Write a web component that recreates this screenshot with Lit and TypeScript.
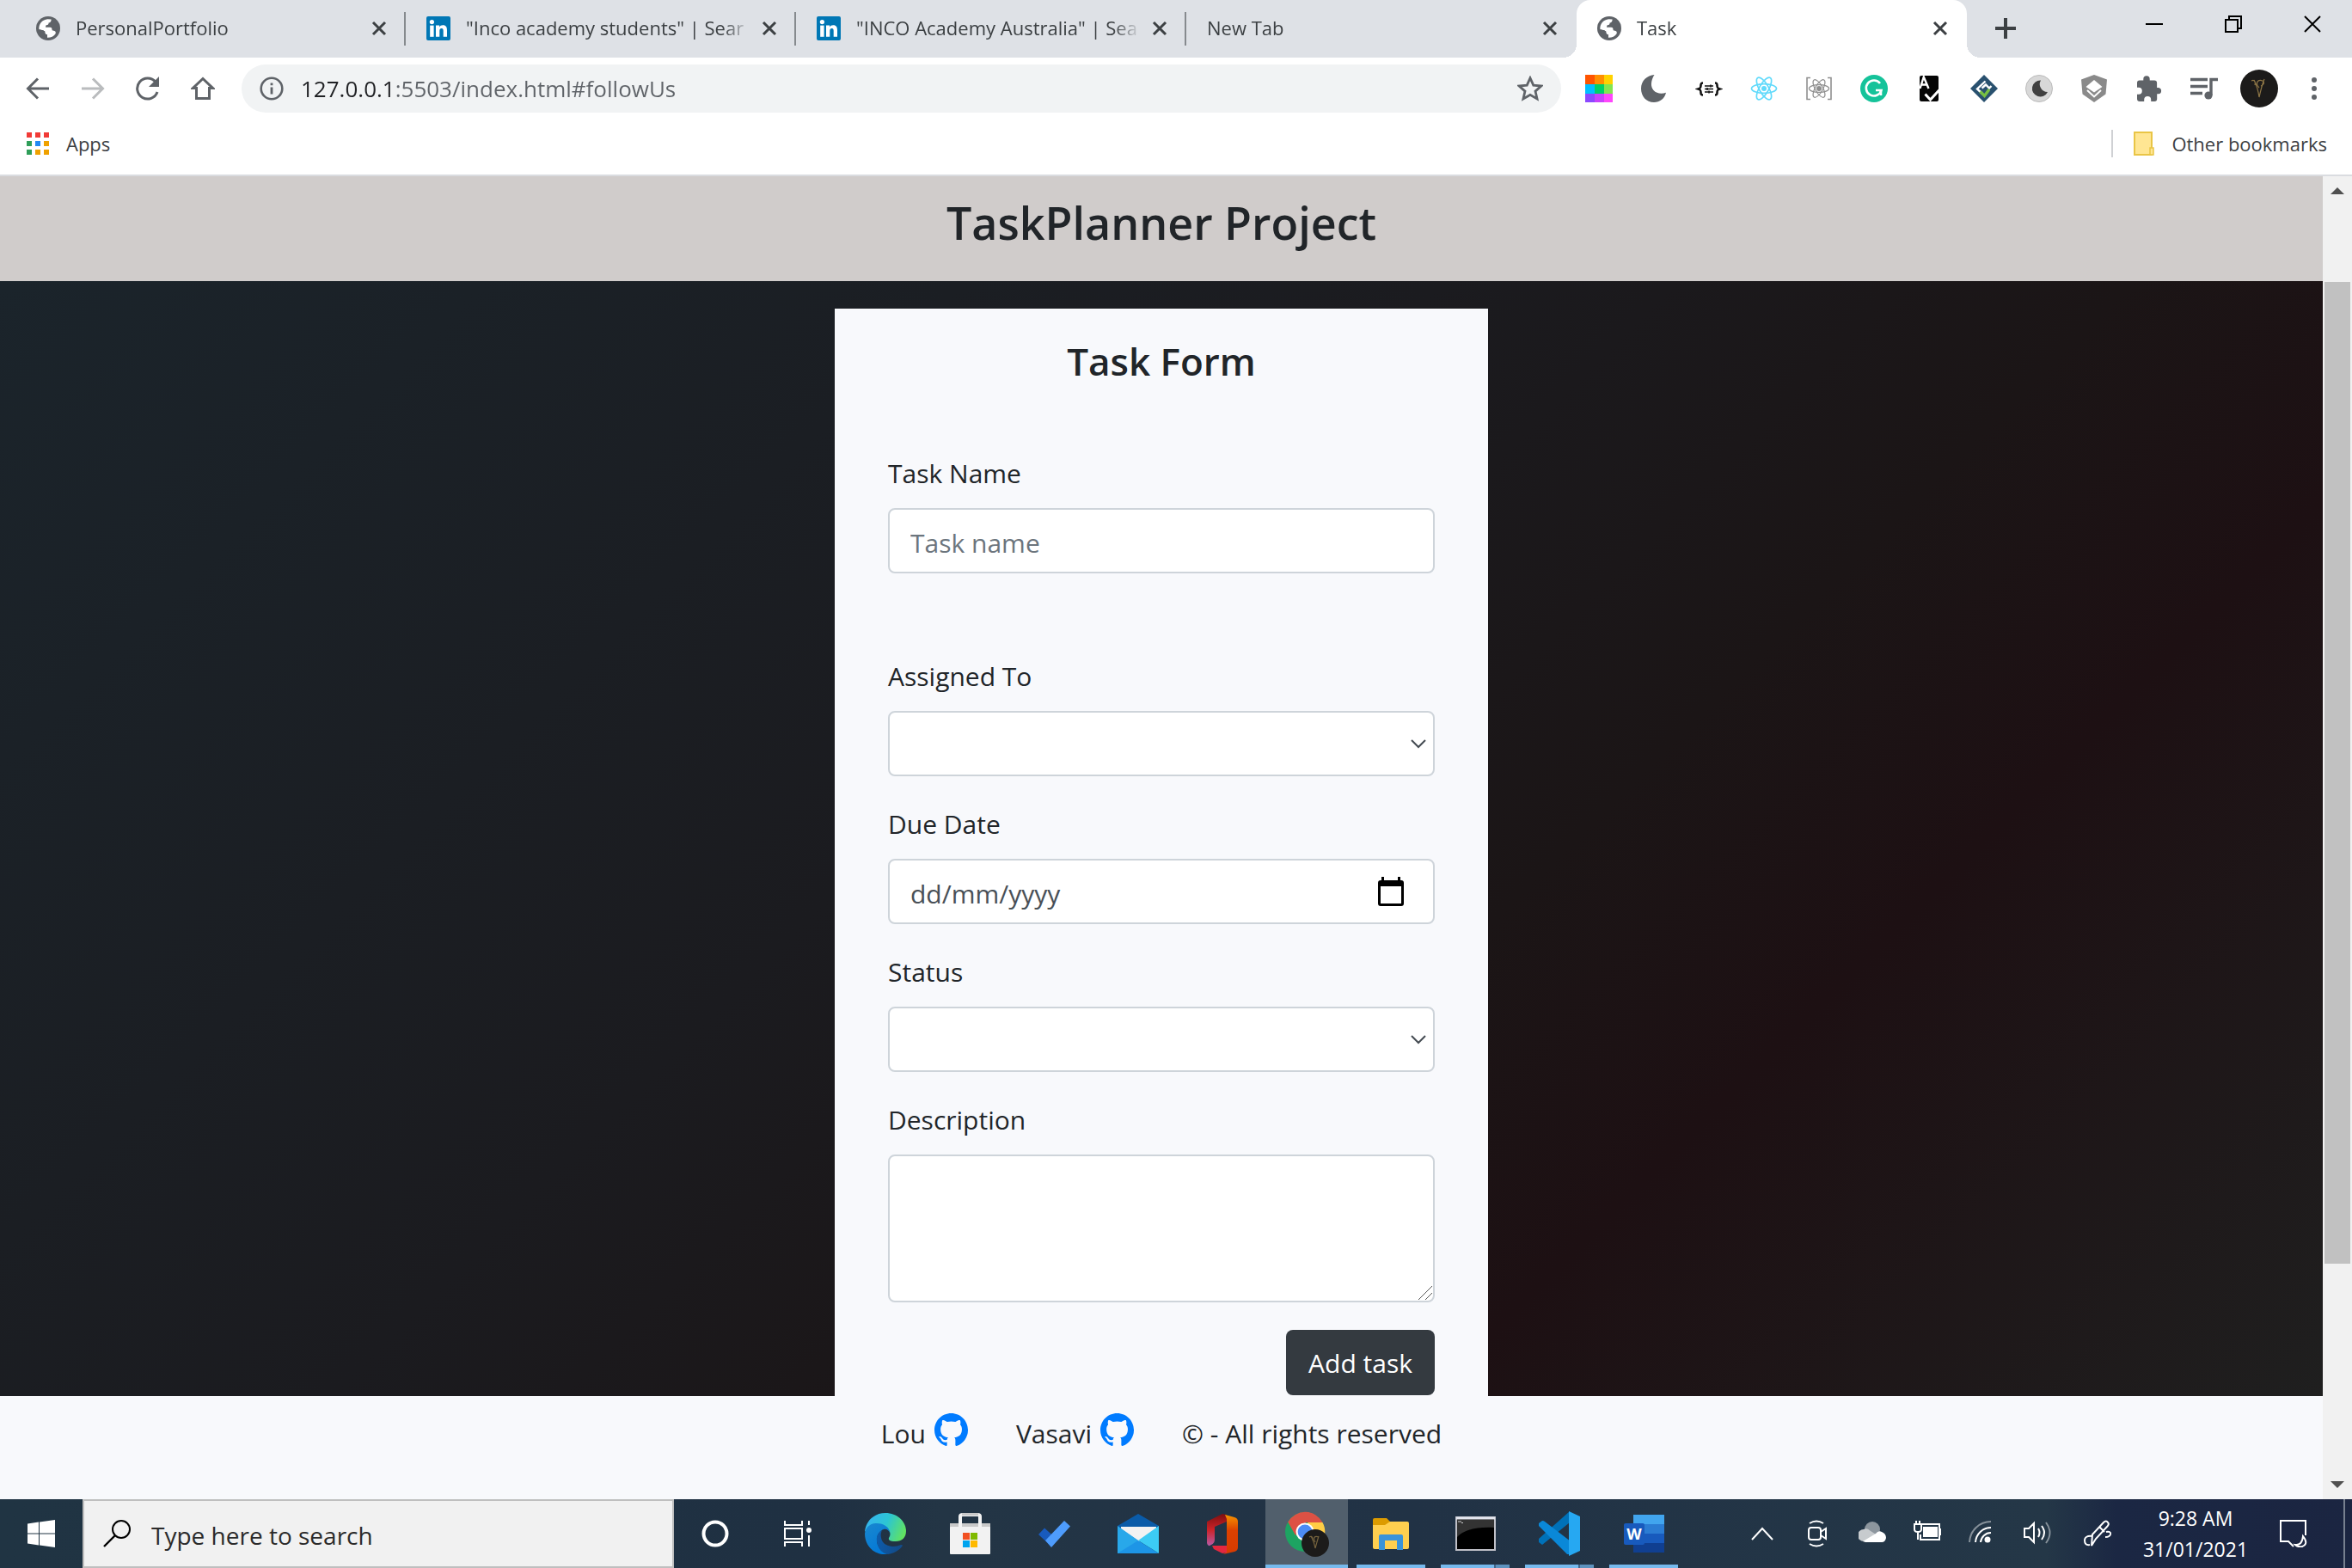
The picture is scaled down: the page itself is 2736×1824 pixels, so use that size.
import { LitElement, html, svg, css, nothing } from "lit";
import type { TemplateResult, SVGTemplateResult } from "lit";
import { customElement, property } from "lit/decorators.js";
import { classMap } from "lit/directives/class-map.js";

type Art = SVGTemplateResult;

const icon = (size: number, box: string, art: Art, height = size): TemplateResult =>
  html`<svg width=${size} height=${height} viewBox=${box} aria-hidden="true">${art}</svg>`;

/* ---------- Browser glyphs ---------- */

const globe = svg`
  <circle cx="14" cy="14" r="14" fill="#5f6368"/>
  <path d="M3.4 15.2C2.8 9 7.4 3.6 13.4 3.2L17.6 3.6C17.8 6 16.6 7.4 14.6 7.6C14.8 9.8 13.4 10.2 11.4 10.4L11 12.8H16C18.4 13 18.6 14.4 18.6 16.2L21.4 17C22.8 17.4 23 18.6 22.6 20.2C20.4 23.4 17 25 13 24.8V21.6C10.8 21.2 10 20 10.2 17.6L8 16.2Z" fill="#fff"/>
  <path d="M3.4 15.2L8 16.2L10.2 17.6C10 20 10.8 21.2 13 21.6V24.8C8 24.6 4 20.6 3.4 15.2Z" fill="#5f6368"/>`;

const linkedin = svg`
  <rect width="28" height="28" rx="2" fill="#0077b5"/>
  <circle cx="6.4" cy="6.6" r="2.6" fill="#fff"/>
  <rect x="4.2" y="10.6" width="4.4" height="13.2" fill="#fff"/>
  <path d="M11 10.600h4.100v1.900c.8-1.400 2.200-2.200 4.100-2.200 3.800 0 4.800 2.400 4.800 6v7.500h-4.300v-6.700c0-2-.5-3.100-2-3.100-1.700 0-2.400 1.200-2.400 3.100v6.700H11z" fill="#fff"/>`;

const cross = svg`<path d="M3 3L17 17M17 3L3 17" stroke="#3c4043" stroke-width="3" fill="none"/>`;
const plus = svg`<path d="M12 0V24M0 12H24" stroke="#3c4043" stroke-width="4"/>`;
const winMin = svg`<path d="M0 10H20" stroke="#000" stroke-width="2"/>`;
const winRestore = svg`<path d="M1 5H15V19H1ZM5 5V1H19V15H15" stroke="#000" stroke-width="2" fill="none"/>`;
const winClose = svg`<path d="M1 1L19 19M19 1L1 19" stroke="#000" stroke-width="2"/>`;

const back = svg`<path d="M27 14H3M14 2.500L2.500 14L14 25.500" stroke="#5f6368" stroke-width="3" fill="none"/>`;
const forward = svg`<path d="M1 14H25M14 2.500L25.500 14L14 25.500" stroke="#babcbe" stroke-width="3" fill="none"/>`;
const reload = svg`<path d="M25 18A12 12 0 1 1 23 6.500" stroke="#5f6368" stroke-width="3" fill="none"/><path d="M27 0V12H15Z" fill="#5f6368"/>`;
const home = svg`<path d="M14 2.500L2.500 13.500H6.500V25.500H21.500V13.500H25.500Z" stroke="#5f6368" stroke-width="3" fill="none"/>`;
const info = svg`<circle cx="14" cy="14" r="12.300" stroke="#5f6368" stroke-width="2.600" fill="none"/><path d="M14 12.500V20.500M14 7.500V10.300" stroke="#5f6368" stroke-width="2.800"/>`;
const star = svg`<path d="M14 2.600L17.500 10.400L26 11.200L19.600 16.900L21.500 25.200L14 20.800L6.500 25.200L8.400 16.900L2 11.200L10.500 10.400Z" stroke="#5f6368" stroke-width="2.600" fill="none"/>`;

/* ---------- Extension glyphs, drawn in a 32 unit box ---------- */

const palette = svg`
  <rect width="11" height="11" fill="#ff5400"/><rect x="11" width="11" height="11" fill="#ff8f00"/><rect x="22" width="10" height="11" fill="#ffd200"/>
  <rect y="11" width="11" height="11" fill="#00bfff"/><rect x="11" y="11" width="11" height="11" fill="#00d067"/><rect x="22" y="11" width="10" height="11" fill="#83e650"/>
  <rect y="22" width="11" height="10" fill="#8c48ff"/><rect x="11" y="22" width="11" height="10" fill="#c940fc"/><rect x="22" y="22" width="10" height="10" fill="#ff46fb"/>`;
const moon = svg`<path d="M16.500 0C12 7 12 14 15.500 18C19 22 25 22.500 30 20.800C28.500 28 22.500 32 16 32C7 32 1 25 1 16C1 7 8 .5 16.500 0Z" fill="#5f6368"/>`;
const braces = svg`<path d="M9 9.500C6.500 9.500 6.500 10.500 6.500 12.500C6.500 14.500 6.500 15.500 3.500 16.500C6.500 17.500 6.500 18.500 6.500 20.500C6.500 22.500 6.500 23.500 9 23.500M23 9.500C25.500 9.500 25.500 10.500 25.500 12.500C25.500 14.500 25.500 15.500 28.500 16.500C25.500 17.500 25.500 18.500 25.500 20.500C25.500 22.500 25.500 23.500 23 23.500" stroke="#111" stroke-width="2.600" fill="none"/><path d="M11 13H21M11 16.500H21M11 20H21M18 11.500V14.500M14 15V18M16 18.500V21.500" stroke="#111" stroke-width="1.500"/>`;
const atom = (color: string, rx: number, ry: number, w: number): Art => svg`
  <g fill="none" stroke=${color} stroke-width=${w}>
    <ellipse cx="16" cy="16" rx=${rx} ry=${ry}/>
    <ellipse cx="16" cy="16" rx=${rx} ry=${ry} transform="rotate(60 16 16)"/>
    <ellipse cx="16" cy="16" rx=${rx} ry=${ry} transform="rotate(120 16 16)"/>
  </g><circle cx="16" cy="16" r="3" fill=${color}/>`;
const react = atom("#61dafb", 14.5, 5.4, 1.7);
const reactBox = svg`${atom("#8f8f8f", 11.6, 4.4, 1.2)}<path d="M6 3.500H2V28.500H6M26 3.500H30V28.500H26" stroke="#8f8f8f" stroke-width="1.600" fill="none"/>`;
const grammarly = svg`<circle cx="16" cy="16" r="16" fill="#15c39a"/><path d="M23 10A9 9 0 1 0 24.500 18H18" stroke="#fff" stroke-width="2.600" fill="none"/><path d="M24 24V18.500" stroke="#fff" stroke-width="2.600"/>`;
const spell = svg`<rect x="5" y="1" width="22" height="30" rx="2" fill="#050505"/><path d="M5.500 16L9.800 2.500L15.500 16M7 11.500H13.500" stroke="#fff" stroke-width="2.400" fill="none"/><path d="M11.500 22.500L17.500 29L29 16.500" stroke="#fff" stroke-width="3" fill="none"/>`;
const diamond = svg`<path d="M16 0L32 16L16 32L0 16Z" fill="#29516f"/><path d="M17.500 7.500L8 16.500L13.500 21.500M13.500 15.500L18 11.500L22 15.500L24.500 13" stroke="#fff" stroke-width="2.400" fill="none"/><path d="M11.500 19.500L16.500 24.500L22 17" stroke="#77c043" stroke-width="3.400" fill="none"/>`;
const darkToggle = svg`<circle cx="16" cy="16" r="15.500" fill="#d8d8d8" stroke="#bbb"/><path d="M18 6.500A9.500 9.500 0 1 0 26 20A9 9 0 0 1 18 6.500Z" fill="#3f3f3f"/>`;
const shield = svg`<path d="M16 0L31 5.500L29.500 22.500L16 32L2.500 22.500L1 5.500Z" fill="#8a8a8a"/><path d="M16 6L25.500 14L16 20.500L6.500 14Z" fill="#fff"/><path d="M8 18L16 25.500L24 18" stroke="#fff" stroke-width="2" fill="none"/>`;
const puzzle = svg`<path d="M27 15h-1.900V9.500a3 3 0 0 0-3-3H16.700V5a3.700 3.700 0 0 0-7.400 0v1.500H5a2.900 2.900 0 0 0-3 3v5.200h1.800a4 4 0 0 1 0 8H2V28a3 3 0 0 0 3 3h5.200v-2a4 4 0 0 1 8 0v2h4a3 3 0 0 0 3-3v-5.700H27a3.700 3.700 0 0 0 0-7.300z" fill="#5f6368"/>`;
const queue = svg`<path d="M0 5.500H20M0 13.500H20M0 21.500H14M24 24V5.500H32" stroke="#5f6368" stroke-width="3.400" fill="none"/><circle cx="21" cy="24" r="4.600" fill="#5f6368"/>`;
const avatar = svg`<circle cx="22" cy="22" r="22" fill="#1c1b1a"/><path d="M13 13C17 11 18 15 17 18M16 12C19 18 21 25 22 32C24 23 26 16 28 11M22 21C17 16 20 11 26 13C29 15 27 18 24 19" stroke="#8f7746" stroke-width="1.200" fill="none"/>`;
const kebab = svg`<circle cx="16" cy="6" r="3" fill="#5f6368"/><circle cx="16" cy="16" r="3" fill="#5f6368"/><circle cx="16" cy="26" r="3" fill="#5f6368"/>`;

const appsGrid = svg`
  <rect width="6" height="6" fill="#f13a36"/><rect x="10" width="6" height="6" fill="#f13a36"/><rect x="20" width="6" height="6" fill="#f13a36"/>
  <rect y="10" width="6" height="6" fill="#2f9e59"/><rect x="10" y="10" width="6" height="6" fill="#2289f4"/><rect x="20" y="10" width="6" height="6" fill="#efa100"/>
  <rect y="20" width="6" height="6" fill="#2f9e59"/><rect x="10" y="20" width="6" height="6" fill="#efa100"/><rect x="20" y="20" width="6" height="6" fill="#efa100"/>`;
const folder = svg`<path d="M1 1H21V27H1Z" fill="#ffe693" stroke="#e9c546" stroke-width="2"/><path d="M19 19H23V27H19Z" fill="#ffe693" stroke="#e9c546" stroke-width="1.500"/>`;

/* ---------- Page glyphs ---------- */

const github = svg`<path fill="#007bff" d="M8 0C3.580 0 0 3.580 0 8c0 3.540 2.290 6.530 5.470 7.590.4.070.55-.17.55-.38 0-.19-.01-.82-.01-1.490-2.010.37-2.530-.49-2.690-.94-.09-.23-.48-.94-.82-1.130-.28-.15-.68-.52-.01-.53.63-.01 1.080.58 1.230.82.72 1.210 1.870.87 2.330.66.070-.52.28-.87.51-1.070-1.780-.2-3.640-.89-3.640-3.950 0-.87.31-1.590.82-2.150-.08-.2-.36-1.020.08-2.120 0 0 .67-.21 2.200.82.64-.18 1.320-.27 2-.27.68 0 1.360.09 2 .27 1.530-1.040 2.200-.82 2.200-.82.44 1.100.16 1.920.08 2.120.51.56.82 1.270.82 2.150 0 3.070-1.870 3.750-3.650 3.950.29.25.54.73.54 1.480 0 1.070-.01 1.930-.01 2.200 0 .21.15.46.55.38A8.013 8.013 0 0016 8c0-4.420-3.580-8-8-8z"/>`;
const chevron = svg`<path d="M1 1L9 9L17 1" stroke="#444b52" stroke-width="2" fill="none"/>`;
const calendar = svg`<path d="M3 4H27A3 3 0 0 1 30 7V31A3 3 0 0 1 27 34H3A3 3 0 0 1 0 31V7A3 3 0 0 1 3 4ZM3 11V31H27V11Z" fill="#000" fill-rule="evenodd"/><path d="M4 0H7V5H4ZM23 0H26V5H23Z" fill="#000"/>`;
const grip = svg`<path d="M0 16L16 0M8 16L16 8" stroke="#555" stroke-width="1"/>`;
const arrowUp = svg`<path d="M0 8L8 0L16 8Z" fill="#505050"/>`;
const arrowDown = svg`<path d="M0 0L8 8L16 0Z" fill="#505050"/>`;

/* ---------- Taskbar glyphs ---------- */

const windows = svg`<path d="M0 4.400L13 2.600V15.400H0ZM14 2.400L32 0V15.400H14ZM0 16.400H13V29.400L0 27.600ZM14 16.400H32V32L14 29.600Z" fill="#fff"/>`;
const magnifier = svg`<circle cx="21" cy="11" r="10" stroke="#000" stroke-width="2" fill="none"/><path d="M14 18L1 31" stroke="#000" stroke-width="2.400"/>`;
const cortana = svg`<circle cx="16" cy="16" r="13.500" stroke="#fff" stroke-width="4" fill="none"/>`;
const taskView = svg`<path d="M1 0V5H21V0M1 30V25H21V30M1 9H21V21H1ZM29 0V5M29 17V30" stroke="#fff" stroke-width="2" fill="none"/><circle cx="29" cy="11" r="3" fill="#fff"/>`;
const edge = svg`
  <defs>
    <linearGradient id="edge-top" x1="0" x2="1" y1=".3" y2=".6"><stop offset="0" stop-color="#35b4f0"/><stop offset=".5" stop-color="#2cc5d3"/><stop offset="1" stop-color="#62e35f"/></linearGradient>
    <linearGradient id="edge-left" x1="0" x2=".6" y1="0" y2="1"><stop offset="0" stop-color="#1a88cf"/><stop offset="1" stop-color="#0278d7"/></linearGradient>
    <linearGradient id="edge-low" x1="0" x2="1" y1=".4" y2=".6"><stop offset="0" stop-color="#0d5bab"/><stop offset="1" stop-color="#134a86"/></linearGradient>
  </defs>
  <path d="M0 22C1 9 11 0 24 0C38 0 48 10 48 21C48 29 43 33 36 33C31 33 27 32 28 29C30 26 30 23 28 20C24 12 8 11 0 22Z" fill="url(#edge-top)"/>
  <path d="M0 24C1 16 7 12 14 12C22 12 29 17 29 23C28 20 25 18 22 19C18 20 14 25 14 31C14 39 19 46 27 48C12 50 0 39 0 24Z" fill="url(#edge-left)"/>
  <path d="M20 20C15 23 13 28 14 33C15 41 20 47 27 48C34 47 41 43 44 38C44 37 43 37 42 37C33 41 21 39 19 29C18 25 19 22 20 20Z" fill="url(#edge-low)"/>`;
const store = svg`
  <path d="M0 12H47V17H0Z" fill="#c9c9c9"/><path d="M12 16V4Q12 2 15 2H32Q35 2 35 4V16" stroke="#f3f3f3" stroke-width="4" fill="none"/>
  <path d="M14 0H33V3H14Z" fill="#c9c9c9"/><rect y="16" width="47" height="32" rx="1" fill="#f2f2f2"/>
  <rect x="15" y="23" width="8" height="8" fill="#f25022"/><rect x="24" y="23" width="8" height="8" fill="#7fba00"/><rect x="15" y="32" width="8" height="8" fill="#00a4ef"/><rect x="24" y="32" width="8" height="8" fill="#ffb900"/>`;
const todo = svg`<path d="M0 16L7 8.500L22 22L15 30Z" fill="#185abd"/><path d="M30 0L37 6.500L15 31L8 23Z" fill="#4e9cfc"/>`;
const mail = svg`
  <path d="M0 14L24 0L48 14V24H0Z" fill="#0a5ba8"/><path d="M4 15H45V32H4Z" fill="#f2f2f2"/>
  <path d="M48 14V46L24 31Z" fill="#3ccbf4"/><path d="M0 15L24 31L48 46H0Z" fill="#1d95e6"/><path d="M0 14L24 31L0 46Z" fill="#28a8ea"/>`;
const office = svg`
  <defs><linearGradient id="office-left" x1="0" x2="0" y1="0" y2="1"><stop offset="0" stop-color="#7d0f10"/><stop offset=".5" stop-color="#cd2329"/><stop offset="1" stop-color="#b95aa5"/></linearGradient>
  <linearGradient id="office-right" x1="0" x2="0" y1="0" y2="1"><stop offset="0" stop-color="#f79400"/><stop offset=".4" stop-color="#dd4100"/><stop offset="1" stop-color="#d83b01"/></linearGradient></defs>
  <path d="M18 0L0 9V34Q1 39 5 36Q9 34 9 30V15L23 9V1Z" fill="url(#office-left)"/><path d="M21 1L32 4Q36 5 36 9V39Q36 43 32 44L19 47L23 44V6Z" fill="url(#office-right)"/><path d="M6 37H23V45L18 46L8 41Z" fill="#e3283f"/>`;
const chrome = svg`
  <circle cx="23" cy="24" r="23" fill="#1da462"/><path d="M3.200 12.500A23 23 0 0 1 43.500 13H24L12 28Z" fill="#dd5144"/>
  <path d="M26 13H43.500A23 23 0 0 1 23 47L33 30Z" fill="#ffcd46"/><circle cx="23" cy="24" r="10.500" fill="#fff"/><circle cx="23" cy="24" r="8.400" fill="#4c8bf5"/>
  <circle cx="35" cy="37" r="16" fill="#1c1b1a"/><path d="M28 30C32 28 32 32 32 34M30 29C33 34 34 38 35 43C37 36 38 32 39 29M35 36C32 31 34 28 39 30" stroke="#77653f" stroke-width="1.200" fill="none"/>`;
const explorer = svg`<path d="M0 2Q0 0 2 0H16L20 4V10H0Z" fill="#dc9b00"/><path d="M0 8H14L20 4H40Q42 4 42 6V34Q42 36 40 36H2Q0 36 0 34Z" fill="#ffcf4f"/><path d="M7 37V21Q7 19 9 19H33Q35 19 35 21V37H28V26H14V37Z" fill="#3a93d9"/>`;
const terminal = svg`<rect x="1" y="1" width="45" height="38" fill="#000" stroke="#bfc0c8" stroke-width="2"/><path d="M2 3.500V24C10 15 26 12 45 13V3.500Z" fill="#333"/><path d="M1 2H46" stroke="#e4e6ef" stroke-width="3"/><path d="M3 6H5M6 5V7M7 7.500H9" stroke="#ccc"/>`;
const vscode = svg`<path d="M0 36L4 39L36 13V0L0 32Z" fill="#0071b8"/><path d="M0 14L4 11Q6 11 7 12L37 35V50L33 50L1 18Q-1 16 0 14Z" fill="#0a88d8"/><path d="M35 0L48 6V46L35 52Z" fill="#26a8f2"/>`;
const word = svg`
  <rect x="11" width="36" height="11" fill="#41a5ee"/><rect x="11" y="11" width="36" height="11" fill="#2b7cd3"/><rect x="11" y="22" width="36" height="11" fill="#185abd"/><rect x="11" y="33" width="36" height="11" fill="#103f91"/>
  <rect y="10" width="24" height="25" rx="2" fill="#185abd"/><text x="12" y="29" text-anchor="middle" font-family="Open Sans, sans-serif" font-weight="700" font-size="18" fill="#fff">W</text>`;

const caret = svg`<path d="M1 15L13 2L25 15" stroke="#fff" stroke-width="2" fill="none"/>`;
const meetNow = svg`<rect x="6" y="9" width="14" height="14" rx="3" stroke="#fff" stroke-width="2" fill="none"/><path d="M20 14L26 10V22L20 18" stroke="#fff" stroke-width="2" fill="none"/><path d="M7 4Q15 -1 23 4M7 28Q15 33 23 28" stroke="#fff" stroke-width="2" fill="none"/>`;
const cloud = svg`<circle cx="16" cy="11" r="9" fill="#8d969e"/><path d="M6 25A7 7 0 0 1 6 11Q10 9 14 13L22 18L8 25Z" fill="#c7cbce"/><path d="M5 25L20 16Q23 12 27 14Q32 16 32 21Q31 26 27 26H8Z" fill="#fff"/>`;
const battery = svg`<path d="M10 5H30V23H8V17" stroke="#fff" stroke-width="2" fill="none"/><rect x="11" y="8" width="17" height="12" fill="#fff"/><rect x="30" y="10" width="3" height="8" fill="#fff"/><path d="M1 5H9V11Q9 14 5 14Q1 14 1 11ZM3 5V1M7 5V1M5 14V23" stroke="#fff" stroke-width="2" fill="#213445"/>`;
const wifi = svg`<g fill="none" stroke="#fff" stroke-width="2"><path d="M1 26A25 25 0 0 1 26 2" opacity=".45"/><path d="M8 26A18 18 0 0 1 26 9M14 26A12 12 0 0 1 26 15"/></g><circle cx="22" cy="23" r="3.500" fill="#fff"/>`;
const volume = svg`<g fill="none" stroke="#fff" stroke-width="2"><path d="M1 10H6L12 4V26L6 20H1Z"/><path d="M17 10Q20 15 17 20M21 7Q27 15 21 23"/><path d="M26 3Q35 15 26 27" opacity=".45"/></g>`;
const pen = svg`<path d="M10 17L23 3Q26 0 28 3Q30 5 27 8L14 22L9 30ZM18 8L24 14M10 19Q1 18 1 24Q1 30 7 29M26 14Q32 13 31 17Q30 20 25 20" stroke="#fff" stroke-width="2" fill="none"/>`;
const notify = svg`<path d="M30 18V1H1V25H10L16 31" stroke="#fff" stroke-width="2" fill="none"/><path d="M27 19Q34 28 26 31Q21 32 18 29Q26 30 27 19Z" stroke="#fff" stroke-width="2" fill="none"/>`;

@customElement("browser-tab")
export class BrowserTab extends LitElement {
  @property() label = "";
  @property() mark: "globe" | "linkedin" | "none" = "none";
  @property({ type: Boolean, reflect: true }) active = false;
  @property({ type: Boolean, reflect: true }) ruled = false;

  static styles = css`
    :host {
      flex: 0 1 454px;
      min-width: 0;
      display: flex;
      align-items: center;
      gap: 18px;
      height: 67px;
      padding: 0 17px 8px 24px;
      box-sizing: border-box;
      position: relative;
    }
    :host([ruled])::after {
      content: "";
      position: absolute;
      right: 0;
      top: 14px;
      width: 2px;
      height: 39px;
      background: #868a8e;
    }
    :host([active]) {
      background: #fff;
      border-radius: 16px 16px 0 0;
    }
    :host([active])::before,
    :host([active])::after {
      content: "";
      position: absolute;
      bottom: 0;
      width: 16px;
      height: 16px;
    }
    :host([active])::before {
      right: 100%;
      background: radial-gradient(circle at 0 0, transparent 16px, #fff 16px);
    }
    :host([active])::after {
      left: 100%;
      background: radial-gradient(circle at 100% 0, transparent 16px, #fff 16px);
    }
    .name {
      flex: 1;
      min-width: 0;
      overflow: hidden;
      white-space: nowrap;
      line-height: 32px;
      margin-top: 4px;
      mask-image: linear-gradient(90deg, #000 calc(100% - 32px), transparent);
    }
    svg {
      display: block;
      flex: none;
      margin-top: 7px;
    }
    .close {
      border: 0;
      background: none;
      padding: 0 4px;
      margin-left: -10px;
    }
  `;

  render() {
    return html`
      ${this.mark === "globe" ? icon(28, "0 0 28 28", globe) : this.mark === "linkedin" ? icon(28, "0 0 28 28", linkedin) : nothing}
      <span class="name">${this.label}</span>
      <button class="close" aria-label="Close ${this.label}">${icon(20, "0 0 20 20", cross)}</button>
    `;
  }
}

@customElement("browser-chrome")
export class BrowserChrome extends LitElement {
  static styles = css`
    :host {
      display: block;
      background: #fff;
      color: #3c4043;
      font-size: 22px;
      border-bottom: 2px solid #dadce0;
    }
    svg { display: block; }
    button {
      border: 0;
      background: none;
      padding: 0;
      display: grid;
      place-items: center;
      font: inherit;
      color: inherit;
    }
    .strip {
      display: flex;
      background: #dee1e6;
      padding-left: 18px;
      height: 67px;
    }
    .newtab { width: 90px; height: 66px; flex: none; }
    .controls {
      margin-left: auto;
      display: flex;
      align-items: flex-start;
    }
    .controls button { width: 92px; height: 56px; }
    .toolbar {
      display: flex;
      align-items: center;
      height: 72px;
      padding: 0 12px;
    }
    .tool { width: 64px; height: 64px; flex: none; }
    .omnibox {
      flex: 1;
      min-width: 0;
      display: flex;
      align-items: center;
      height: 56px;
      border-radius: 28px;
      background: #f1f3f4;
      padding: 0 21px;
      margin: 0 12px 0 13px;
      gap: 20px;
    }
    .url {
      flex: 1;
      min-width: 0;
      border: 0;
      outline: 0;
      padding: 0;
      font: inherit;
      font-size: 26px;
      line-height: 40px;
      color: transparent;
      background: linear-gradient(90deg, #202124 108px, #5f6368 108px);
      -webkit-background-clip: text;
      background-clip: text;
    }
    .bookmarks {
      display: flex;
      align-items: center;
      height: 56px;
      padding: 0 29px 8px 31px;
    }
    .bookmark {
      display: flex;
      align-items: center;
      gap: 20px;
      line-height: 32px;
      text-decoration: none;
      color: inherit;
    }
    .other {
      margin-left: auto;
      border-left: 2px solid #cfd1d4;
      padding-left: 24px;
    }
  `;

  render() {
    const tools: Array<[string, Art]> = [
      ["Palette", palette], ["Night mode", moon], ["JSON viewer", braces], ["React tools", react],
      ["React inspector", reactBox], ["Grammar", grammarly], ["Spelling", spell], ["Diamond", diamond],
      ["Dark toggle", darkToggle], ["Shield", shield], ["Extensions", puzzle], ["Media", queue],
    ];
    return html`
      <div class="strip">
        <browser-tab mark="globe" label="PersonalPortfolio" ruled></browser-tab>
        <browser-tab mark="linkedin" label='"Inco academy students" | Sear' ruled></browser-tab>
        <browser-tab mark="linkedin" label='"INCO Academy Australia" | Sea' ruled></browser-tab>
        <browser-tab label="New Tab"></browser-tab>
        <browser-tab mark="globe" label="Task" active></browser-tab>
        <button class="newtab" aria-label="New tab">${icon(24, "0 0 24 24", plus)}</button>
        <div class="controls">
          <button aria-label="Minimise">${icon(20, "0 0 20 20", winMin)}</button>
          <button aria-label="Restore">${icon(20, "0 0 20 20", winRestore)}</button>
          <button aria-label="Close window">${icon(20, "0 0 20 20", winClose)}</button>
        </div>
      </div>
      <div class="toolbar">
        <button class="tool" aria-label="Back">${icon(28, "0 0 28 28", back)}</button>
        <button class="tool" aria-label="Forward">${icon(28, "0 0 28 28", forward)}</button>
        <button class="tool" aria-label="Reload">${icon(28, "0 0 28 28", reload)}</button>
        <button class="tool" aria-label="Home">${icon(28, "0 0 28 28", home)}</button>
        <div class="omnibox">
          ${icon(28, "0 0 28 28", info)}
          <input class="url" type="text" aria-label="Address" value="127.0.0.1:5503/index.html#followUs">
          <button aria-label="Bookmark this page">${icon(30, "0 0 28 28", star)}</button>
        </div>
        ${tools.map(([name, art]) => html`<button class="tool" aria-label=${name}>${icon(32, "0 0 32 32", art)}</button>`)}
        <button class="tool" aria-label="Profile">${icon(44, "0 0 44 44", avatar)}</button>
        <button class="tool" aria-label="Menu">${icon(32, "0 0 32 32", kebab)}</button>
      </div>
      <div class="bookmarks">
        <a class="bookmark" href="#apps">${icon(26, "0 0 26 26", appsGrid)}Apps</a>
        <a class="bookmark other" href="#other">${icon(24, "0 0 24 28", folder, 28)}Other bookmarks</a>
      </div>
    `;
  }
}

@customElement("task-page")
export class TaskPage extends LitElement {
  static styles = css`
    :host {
      flex: 1;
      min-width: 0;
      display: flex;
      flex-direction: column;
      background: #f8f9fc;
      color: #212529;
      font-size: 30px;
      line-height: 48px;
    }
    svg { display: block; }
    h1, h2 { margin: 0; font-weight: 600; text-align: center; }
    .banner { background: #d0cccb; padding: 20px 0 34px; }
    h1 { font-size: 52px; line-height: 68px; }
    main {
      display: flex;
      justify-content: center;
      padding-top: 32px;
      background: linear-gradient(135deg, #1b242b, #1b1b1f 42%, #1b1516 62%, #1d1013 74%, #1f1f1f);
    }
    .card {
      box-sizing: border-box;
      width: 100%;
      max-width: 760px;
      padding: 32px 62px 1px;
      background: #f8f9fc;
      display: flex;
      flex-direction: column;
    }
    h2 { font-size: 44px; line-height: 58px; margin-bottom: 78px; }
    .field { display: flex; flex-direction: column; gap: 16px; margin-bottom: 32px; }
    .field.roomy { margin-bottom: 96px; }
    .stack { display: grid; align-items: center; }
    .stack > * { grid-area: 1 / 1; }
    .control {
      box-sizing: border-box;
      width: 100%;
      height: 76px;
      border: 2px solid #ced4da;
      border-radius: 8px;
      background: #fff;
      padding: 4px 24px 0;
      font: inherit;
      color: #495057;
      margin: 0;
      outline: 0;
      appearance: none;
    }
    .control::placeholder { color: #6c757d; opacity: 1; }
    .date::placeholder { color: #495057; }
    textarea.control { height: 172px; resize: none; }
    .stack > svg, .pick { justify-self: end; pointer-events: none; }
    .chev svg { margin-right: 10px; }
    .corner svg { align-self: end; margin: 0 3px 3px 0; }
    .pick { border: 0; background: none; padding: 0; margin-right: 36px; }
    .add {
      align-self: flex-end;
      height: 76px;
      padding: 2px 26px 0;
      border: 0;
      border-radius: 8px;
      background: #343a40;
      color: #fff;
      font: inherit;
    }
    footer {
      flex: 1;
      display: flex;
      justify-content: center;
      align-items: flex-start;
      gap: 56px;
      padding: 20px 0 48px;
    }
    .who { display: flex; gap: 10px; }
    p { margin: 0; }
  `;

  render() {
    return html`
      <header class="banner"><h1>TaskPlanner Project</h1></header>
      <main>
        <form class="card" @submit=${(e: Event) => e.preventDefault()}>
          <h2>Task Form</h2>
          <div class="field roomy">
            <label for="name">Task Name</label>
            <input id="name" class="control" type="text" placeholder="Task name">
          </div>
          <div class="field">
            <label for="who">Assigned To</label>
            <div class="stack chev"><select id="who" class="control"><option></option></select>${icon(18, "0 0 18 11", chevron, 11)}</div>
          </div>
          <div class="field">
            <label for="due">Due Date</label>
            <div class="stack">
              <input id="due" class="control date" type="text" placeholder="dd/mm/yyyy">
              <button class="pick" type="button" aria-label="Choose a date">${icon(30, "0 0 30 34", calendar, 34)}</button>
            </div>
          </div>
          <div class="field">
            <label for="status">Status</label>
            <div class="stack chev"><select id="status" class="control"><option></option></select>${icon(18, "0 0 18 11", chevron, 11)}</div>
          </div>
          <div class="field">
            <label for="desc">Description</label>
            <div class="stack corner"><textarea id="desc" class="control"></textarea>${icon(16, "0 0 16 16", grip)}</div>
          </div>
          <button class="add" type="submit">Add task</button>
        </form>
      </main>
      <footer>
        <div class="who"><span>Lou</span><a href="#lou" aria-label="Lou on GitHub">${icon(39, "0 0 16 16", github)}</a></div>
        <div class="who"><span>Vasavi</span><a href="#vasavi" aria-label="Vasavi on GitHub">${icon(39, "0 0 16 16", github)}</a></div>
        <p>© - All rights reserved</p>
      </footer>
    `;
  }
}

@customElement("scroll-rail")
export class ScrollRail extends LitElement {
  static styles = css`
    :host {
      flex: none;
      width: 34px;
      display: flex;
      flex-direction: column;
      align-items: center;
      background: #f1f1f1;
    }
    button { border: 0; background: none; padding: 0; height: 34px; width: 34px; display: grid; place-items: center; }
    .track { flex: 1; width: 30px; display: flex; flex-direction: column; }
    .before { flex: 89; }
    .thumb { flex: 1142; background: #c1c1c1; }
    .after { flex: 240; }
  `;

  render() {
    return html`
      <button aria-label="Scroll up">${icon(16, "0 0 16 8", arrowUp, 8)}</button>
      <div class="track"><div class="before"></div><div class="thumb"></div><div class="after"></div></div>
      <button aria-label="Scroll down">${icon(16, "0 0 16 8", arrowDown, 8)}</button>
    `;
  }
}

interface Launcher {
  name: string;
  art: Art;
  w: number;
  h: number;
  state?: "active" | "open" | "stacked";
}

@customElement("task-bar")
export class TaskBar extends LitElement {
  static styles = css`
    :host {
      display: flex;
      height: 80px;
      color: #fff;
      background: linear-gradient(90deg, #203443, #1f3042 35%, #233545 40%, #213245 60%, #243747 87%, #1b2743 90%, #1b2541);
    }
    svg { display: block; }
    button { border: 0; background: none; padding: 0; display: grid; place-items: center; color: inherit; font: inherit; }
    .start { width: 96px; flex: none; }
    .search {
      flex: 0 1 688px;
      min-width: 0;
      box-sizing: border-box;
      display: flex;
      align-items: center;
      gap: 24px;
      padding: 0 22px;
      border: 2px solid #bfbfbf;
      background: #f1f1f1;
    }
    .search svg { flex: none; }
    .search input {
      flex: 1;
      min-width: 0;
      border: 0;
      outline: 0;
      background: none;
      padding: 4px 0 0;
      font: inherit;
      font-size: 28px;
      line-height: 40px;
    }
    .search input::placeholder { color: #2b2b2b; opacity: 1; }
    .system { width: 96px; }
    .apps { display: flex; gap: 2px; padding-left: 6px; }
    .app { width: 96px; position: relative; }
    .app.active { background: #515f6c; }
    .app.open::after, .app.stacked::after, .app.active::after {
      content: "";
      position: absolute;
      bottom: 0;
      left: 8px;
      right: 8px;
      height: 4px;
      background: #76b9ed;
    }
    .app.active::after { left: 0; right: 0; }
    .app.stacked::after { background: linear-gradient(90deg, #76b9ed 62px, #42668a 62px, #42668a 64px, #5d92be 64px); }
    .tray { margin-left: auto; display: flex; align-items: stretch; }
    .tray button { width: 64px; }
    .tray .ink { width: 76px; }
    .clock {
      width: 152px;
      text-align: center;
      font-size: 23px;
      line-height: 36px;
      padding: 4px 0;
    }
    .tray .notify { width: 76px; margin-right: 20px; }
    .peek { width: 8px; border-left: 2px solid #77808f; }
  `;

  render() {
    const apps: Launcher[] = [
      { name: "Edge", art: edge, w: 48, h: 48 },
      { name: "Store", art: store, w: 47, h: 48 },
      { name: "To Do", art: todo, w: 37, h: 31 },
      { name: "Mail", art: mail, w: 48, h: 46 },
      { name: "Office", art: office, w: 36, h: 47 },
      { name: "Chrome", art: chrome, w: 51, h: 53, state: "active" },
      { name: "File Explorer", art: explorer, w: 42, h: 37, state: "open" },
      { name: "Command Prompt", art: terminal, w: 47, h: 40, state: "stacked" },
      { name: "Visual Studio Code", art: vscode, w: 48, h: 52, state: "stacked" },
      { name: "Word", art: word, w: 47, h: 44, state: "open" },
    ];
    const tray: Array<[string, Art]> = [
      ["Meet now", meetNow], ["OneDrive", cloud], ["Battery", battery], ["Network", wifi], ["Volume", volume],
    ];
    return html`
      <button class="start" aria-label="Start">${icon(32, "0 0 32 32", windows)}</button>
      <label class="search">${icon(32, "0 0 32 32", magnifier)}<input type="text" aria-label="Search" placeholder="Type here to search"></label>
      <button class="system" aria-label="Cortana">${icon(32, "0 0 32 32", cortana)}</button>
      <button class="system" aria-label="Task view">${icon(32, "0 0 32 30", taskView, 30)}</button>
      <div class="apps">
        ${apps.map(a => html`<button
          class=${classMap({ app: true, active: a.state === "active", open: a.state === "open", stacked: a.state === "stacked" })}
          aria-label=${a.name}>${icon(a.w, `0 0 ${a.w} ${a.h}`, a.art, a.h)}</button>`)}
      </div>
      <div class="tray">
        <button aria-label="Show hidden icons">${icon(26, "0 0 26 16", caret, 16)}</button>
        ${tray.map(([name, art]) => html`<button aria-label=${name}>${icon(32, "0 0 32 32", art)}</button>`)}
        <button class="ink" aria-label="Pen">${icon(32, "0 0 32 32", pen)}</button>
        <div class="clock"><div>9:28 AM</div><div>31/01/2021</div></div>
        <button class="notify" aria-label="Notifications">${icon(32, "0 0 32 32", notify)}</button>
        <div class="peek"></div>
      </div>
    `;
  }
}

@customElement("app-root")
export class AppRoot extends LitElement {
  static styles = css`
    :host {
      display: flex;
      flex-direction: column;
      min-height: 100vh;
      font-family: "Open Sans", "Noto Sans", sans-serif;
    }
    .view { flex: 1; display: flex; }
  `;

  render() {
    return html`
      <browser-chrome></browser-chrome>
      <div class="view"><task-page></task-page><scroll-rail></scroll-rail></div>
      <task-bar></task-bar>
    `;
  }
}
